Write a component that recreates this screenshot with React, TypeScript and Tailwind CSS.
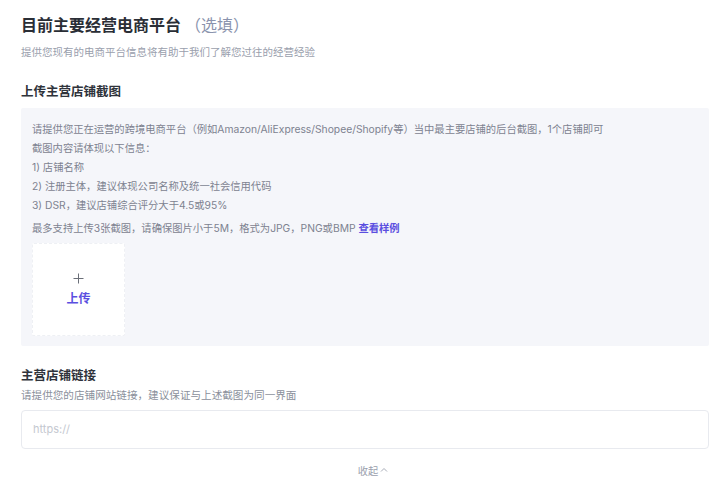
export default function App() {
  return (
    <div
      className="w-[720px] h-[494px] overflow-hidden bg-white text-[#1f2329]"
      style={{ fontFamily: '"Inter", "Noto Sans CJK SC", sans-serif' }}
    >
      <div className="pl-[21px] pr-[11px] pt-[14px]">
        <h1 className="text-[16px] font-bold leading-[22px] text-[#2a2e36]">
          目前主要经营电商平台
          <span className="ml-[4px] font-normal text-[#8a93ad]">（选填）</span>
        </h1>
        <p className="mt-[9px] text-[10.5px] leading-[16px] text-[#9aa0ad]">提供您现有的电商平台信息将有助于我们了解您过往的经营经验</p>

        <h2 className="mt-[22px] text-[12.5px] font-bold leading-[18px] text-[#2f333b]">上传主营店铺截图</h2>
        <div className="mt-[7px] rounded-[2px] bg-[#f5f6fa] px-[11px] pt-[12px] pb-[10px]">
          <div className="text-[10.3px] leading-[19px] text-[#7d8290]">
            <p>请提供您正在运营的跨境电商平台（例如Amazon/AliExpress/Shopee/Shopify等）当中最主要店铺的后台截图，1个店铺即可</p>
            <p>截图内容请体现以下信息：</p>
            <p>1) 店铺名称</p>
            <p>2) 注册主体，建议体现公司名称及统一社会信用代码</p>
            <p>3) DSR，建议店铺综合评分大于4.5或95%</p>
            <p className="mt-[4px]">
              最多支持上传3张截图，请确保图片小于5M，格式为JPG，PNG或BMP{" "}
              <span className="font-bold text-[#5b4fe0]">查看样例</span>
            </p>
          </div>
          <div className="mt-[5px] flex h-[93px] w-[93px] flex-col items-center justify-center rounded-[2px] border border-dashed border-[#eef0f4] bg-white">
            <svg width="11" height="11" viewBox="0 0 11 11" fill="none">
              <path d="M5.5 0.5V10.5M0.5 5.5H10.5" stroke="#6b6f78" strokeWidth="1" />
            </svg>
            <span className="mt-[7px] text-[12px] font-bold leading-[16px] text-[#5b4fe0]">上传</span>
          </div>
        </div>

        <h2 className="mt-[21px] text-[12.5px] font-bold leading-[18px] text-[#2f333b]">主营店铺链接</h2>
        <p className="mt-[3px] text-[10.6px] leading-[16px] text-[#8a8f9b]">请提供您的店铺网站链接，建议保证与上述截图为同一界面</p>
        <div className="mt-[6px] flex h-[39px] items-center rounded-[4px] border border-[#e8eaef] px-[11px]">
          <input
            className="w-full bg-transparent text-[11px] text-[#333] outline-none placeholder:text-[#c4c8d0]"
            placeholder="https://"
          />
        </div>
        <div className="mt-[14px] flex justify-center text-[10.3px] leading-[16px] text-[#9aa0ad]">
          <span className="ml-[16px]">收起</span>
          <svg className="ml-[2px] mt-[4px]" width="8" height="6" viewBox="0 0 8 6" fill="none">
            <path d="M1 4.5L4 1.5L7 4.5" stroke="#a8adb8" strokeWidth="1" />
          </svg>
        </div>
      </div>
    </div>
  );
}
